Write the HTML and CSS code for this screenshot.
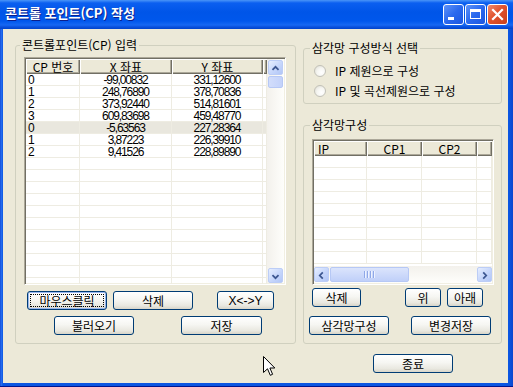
FILE: index.html
```html
<!DOCTYPE html>
<html lang="ko">
<head>
  <meta charset="UTF-8">
  <title>콘트롤 포인트(CP) 작성</title>
  <link rel="stylesheet" href="styles.css">
</head>
<body>

<div class="window">
  <div class="titlebar">
    <span class="title">콘트롤 포인트(CP) 작성</span>
    <div class="caption-buttons">
      <span class="cap-btn cap-min"><svg width="19" height="19" viewBox="0 0 19 19"><rect x="4" y="12" width="6" height="3" fill="#fff"/></svg></span>
      <span class="cap-btn cap-max"><svg width="19" height="19" viewBox="0 0 19 19"><rect x="4.5" y="4.5" width="10" height="9" fill="none" stroke="#fff" stroke-width="1"/><rect x="4" y="4" width="11" height="3" fill="#fff"/></svg></span>
      <span class="cap-btn cap-close"><svg width="19" height="19" viewBox="0 0 19 19"><path d="M5 5 L14 14 M14 5 L5 14" stroke="#fff" stroke-width="2.2" stroke-linecap="square"/></svg></span>
    </div>
  </div>

  <div class="frame">
    <div class="client">

      <!-- 콘트롤포인트 입력 -->
      <fieldset class="group group-cp">
        <legend>콘트롤포인트(CP) 입력</legend>
        <div class="listview list-cp">
          <div class="list-main">
            <div class="list-head">
              <span>CP 번호</span><span>X 좌표</span><span>Y 좌표</span><span></span>
            </div>
            <div class="list-rows">
              <div class="row"><span class="c-no">0</span><span class="num">-99,00832</span><span class="num">331,12600</span><span></span></div>
              <div class="row"><span class="c-no">1</span><span class="num">248,76890</span><span class="num">378,70836</span><span></span></div>
              <div class="row"><span class="c-no">2</span><span class="num">373,92440</span><span class="num">514,81601</span><span></span></div>
              <div class="row"><span class="c-no">3</span><span class="num">609,83698</span><span class="num">459,48770</span><span></span></div>
              <div class="row selected"><span class="c-no">0</span><span class="num">-5,63563</span><span class="num">227,28364</span><span></span></div>
              <div class="row"><span class="c-no">1</span><span class="num">3,87223</span><span class="num">226,39910</span><span></span></div>
              <div class="row"><span class="c-no">2</span><span class="num">9,41526</span><span class="num">228,89890</span><span></span></div>
              <div class="row"><span></span><span></span><span></span><span></span></div>
              <div class="row"><span></span><span></span><span></span><span></span></div>
              <div class="row"><span></span><span></span><span></span><span></span></div>
              <div class="row"><span></span><span></span><span></span><span></span></div>
              <div class="row"><span></span><span></span><span></span><span></span></div>
              <div class="row"><span></span><span></span><span></span><span></span></div>
              <div class="row"><span></span><span></span><span></span><span></span></div>
              <div class="row"><span></span><span></span><span></span><span></span></div>
              <div class="row"><span></span><span></span><span></span><span></span></div>
              <div class="row"><span></span><span></span><span></span><span></span></div>
              <div class="row"><span></span><span></span><span></span><span></span></div>
            </div>
          </div>
          <div class="vscroll">
            <span class="sb-btn"><svg width="15" height="15" viewBox="0 0 15 15"><path d="M4 9 L7.5 5.5 L11 9" fill="none" stroke="#3c5690" stroke-width="2"/></svg></span>
            <span class="sb-thumb sb-thumb-v"></span>
            <span class="sb-fill"></span>
            <span class="sb-btn"><svg width="15" height="15" viewBox="0 0 15 15"><path d="M4 6 L7.5 9.5 L11 6" fill="none" stroke="#3c5690" stroke-width="2"/></svg></span>
          </div>
        </div>
        <div class="btn-row row-a">
          <button class="btn focus b-mouse">마우스클릭</button>
          <button class="btn b-del">삭제</button>
          <button class="btn b-swap">X&lt;-&gt;Y</button>
        </div>
        <div class="btn-row row-b">
          <button class="btn b-load">불러오기</button>
          <button class="btn b-save">저장</button>
        </div>
      </fieldset>

      <div class="right-col">
        <!-- 구성방식 -->
        <fieldset class="group group-mode">
          <legend>삼각망 구성방식 선택</legend>
          <label class="radio"><span class="radio-dot"></span>IP 제원으로 구성</label>
          <label class="radio"><span class="radio-dot"></span>IP 및 곡선제원으로 구성</label>
        </fieldset>

        <!-- 삼각망구성 -->
        <fieldset class="group group-tri">
          <legend>삼각망구성</legend>
          <div class="listview list-tri">
            <div class="list-head">
              <span class="left">IP</span><span>CP1</span><span>CP2</span><span></span>
            </div>
            <div class="list-rows">
              <div class="row"><span></span><span></span><span></span><span></span></div>
              <div class="row"><span></span><span></span><span></span><span></span></div>
              <div class="row"><span></span><span></span><span></span><span></span></div>
              <div class="row"><span></span><span></span><span></span><span></span></div>
              <div class="row"><span></span><span></span><span></span><span></span></div>
              <div class="row"><span></span><span></span><span></span><span></span></div>
              <div class="row"><span></span><span></span><span></span><span></span></div>
              <div class="row"><span></span><span></span><span></span><span></span></div>
              <div class="row"><span></span><span></span><span></span><span></span></div>
            </div>
            <div class="hscroll">
              <span class="sb-btn"><svg width="15" height="15" viewBox="0 0 15 15"><path d="M9 4 L5.5 7.5 L9 11" fill="none" stroke="#3c5690" stroke-width="2"/></svg></span>
              <span class="sb-thumb sb-thumb-h"><i></i><i></i><i></i><i></i></span>
              <span class="sb-fill"></span>
              <span class="sb-btn"><svg width="15" height="15" viewBox="0 0 15 15"><path d="M6 4 L9.5 7.5 L6 11" fill="none" stroke="#3c5690" stroke-width="2"/></svg></span>
            </div>
          </div>
          <div class="btn-row row-c">
            <button class="btn b-tdel">삭제</button>
            <button class="btn b-up">위</button>
            <button class="btn b-down">아래</button>
          </div>
          <div class="btn-row row-d">
            <button class="btn b-build">삼각망구성</button>
            <button class="btn b-apply">변경저장</button>
          </div>
        </fieldset>

        <div class="exit-row">
          <button class="btn b-exit">종료</button>
        </div>
      </div>

    </div>
  </div>

  <svg class="cursor" width="13" height="21" viewBox="0 0 13 21">
    <path d="M0.5 0.5 L0.5 16.5 L4.5 12.8 L7.3 19.3 L9.6 18.3 L6.9 12 L11.8 12 Z" fill="#fff" stroke="#000" stroke-width="1"/>
  </svg>
</div>

</body>
</html>
```

FILE: styles.css
```css
* {
  box-sizing: border-box;
}

body {
  margin: 0;
  font-family: "Noto Sans CJK KR", "Liberation Sans", sans-serif;
  font-size: 12px;
  color: #000;
  background: #fff;
}

.window {
  position: relative;
  width: 513px;
  height: 387px;
  display: flex;
  flex-direction: column;
}

/* 타이틀바 */
.titlebar {
  height: 29px;
  display: flex;
  align-items: center;
  padding: 0 5px 3px 5px;
  background: linear-gradient(#4a95f8 0, #0b5ff0 3px, #0055e8 12px, #0057ec 21px, #1668f3 25px, #0a50dc 27px, #0044cc 29px);
}

.title {
  flex: 1;
  color: #fff;
  font-weight: 700;
  font-size: 13px;
  line-height: 16px;
  text-shadow: 1px 1px #0b1f8c;
}

.caption-buttons {
  display: flex;
  gap: 1px;
  margin-top: 2px;
}

.cap-btn {
  width: 21px;
  height: 21px;
  border: 1px solid #fff;
  border-radius: 3px;
  display: flex;
  background: linear-gradient(135deg, #5f93f8 0, #2a69ee 50%, #1b56e0 100%);
}

.cap-close {
  background: linear-gradient(135deg, #f08a6c 0, #e0532e 45%, #c8401c 100%);
}

/* 창 테두리 */
.frame {
  flex: 1;
  display: flex;
  padding: 0 5px 3px 3px;
  background: linear-gradient(to right, #0a3ccc 0, #2a72f2 1px, #0b56e2 3px, #0b56e2 calc(100% - 4px), #0a46cc 100%);
  border-bottom: 1px solid #00158e;
}

.client {
  flex: 1;
  background: #ece9d8;
  display: flex;
  align-items: flex-start;
  padding-left: 12px;
}

/* 그룹박스 */
.group {
  margin: 0;
  min-width: 0;
  border: 1px solid #d0d0bf;
  border-radius: 3px;
}

.group legend {
  padding: 0 2px;
  font-size: 12px;
  line-height: 14px;
  color: #000;
}

.group-cp {
  width: 281px;
  margin-top: 9px;
  padding: 5px 9px 8px 8px;
}

.group-cp legend {
  margin-left: -4px;
}

.right-col {
  width: 199px;
  margin-left: 7px;
  margin-top: 12px;
  display: flex;
  flex-direction: column;
}

.group-mode {
  padding: 6px 9px 2px 9px;
}

.group-mode legend {
  margin-left: -3px;
}

.group-tri {
  margin-top: 14px;
  padding: 7px 7px 8px 8px;
}

.group-tri legend {
  margin-left: -2px;
}

/* 라디오 */
.radio {
  display: flex;
  align-items: center;
  height: 20px;
  line-height: 14px;
}

.radio-dot {
  width: 12px;
  height: 12px;
  margin: 0 9px 0 1px;
  border: 1px solid #c2c1b8;
  border-radius: 50%;
  background: radial-gradient(circle at 65% 65%, #fff 0, #f6f6f2 45%, #dcdbd2 100%);
}

/* 리스트뷰 */
.listview {
  display: flex;
  background: #fff;
  border: 1px solid;
  border-color: #aca899 #fff #fff #aca899;
  box-shadow: inset 1px 1px #716f64, inset -1px -1px #f1efe2;
  padding: 1px;
  overflow: hidden;
}

.list-cp {
  width: 262px;
  height: 228px;
}

.list-main {
  width: 241px;
}

.list-head,
.row {
  display: grid;
}

.list-cp .list-head,
.list-cp .row {
  grid-template-columns: 54px 92px 91px 4px;
}

.list-head {
  height: 15px;
  background: #ece9d8;
}

.list-head span {
  text-align: center;
  line-height: 15px;
  white-space: nowrap;
  box-shadow: inset 1px 1px #fff, inset -1px -1px #716f64, inset -2px -2px #aca899;
}

.list-head span.left {
  text-align: left;
  padding-left: 4px;
}

.row {
  height: 12px;
}

.row span {
  height: 12px;
  border-right: 1px solid #eeece2;
  border-bottom: 1px solid #eeece2;
  line-height: 12px;
  white-space: nowrap;
}

.row.selected {
  background: #e9e7de;
}

.row .c-no {
  padding-left: 2px;
  font-family: "Liberation Sans", sans-serif;
}

.row .num {
  text-align: center;
  font-family: "Liberation Sans", sans-serif;
  letter-spacing: -1.1px;
}

/* 스크롤바 */
.vscroll {
  width: 17px;
  display: flex;
  flex-direction: column;
  align-items: center;
  background: linear-gradient(to right, #f3f1ec, #fefefb);
}

.hscroll {
  height: 17px;
  display: flex;
  align-items: center;
  background: linear-gradient(#f3f1ec, #fefefb);
}

.sb-btn {
  width: 15px;
  height: 15px;
  flex: none;
  display: flex;
  border: 1px solid #bccdf6;
  border-radius: 2px;
  background: linear-gradient(135deg, #e6eeff 0, #c6d6fb 55%, #b1c6f7 100%);
}

.vscroll .sb-btn:first-child {
  margin-top: 1px;
}

.sb-thumb {
  flex: none;
  border: 1px solid #b6c8f5;
  border-radius: 2px;
  background: linear-gradient(to right, #d2ddfb, #c3d2fa);
}

.sb-thumb-v {
  width: 15px;
  height: 12px;
  margin-top: 1px;
}

.sb-thumb-h {
  width: 79px;
  height: 15px;
  margin-left: 1px;
  display: flex;
  justify-content: center;
  align-items: center;
  gap: 1px;
  background: linear-gradient(#dbe4fc, #c0d0f9);
}

.sb-thumb-h i {
  width: 1px;
  height: 7px;
  background: #8fa8e8;
  box-shadow: 1px 0 #eef3ff;
  margin-right: 1px;
}

.sb-fill {
  flex: 1;
}

.list-tri {
  width: 182px;
  height: 146px;
  flex-direction: column;
}

.list-tri .list-head,
.list-tri .row {
  grid-template-columns: 53px 55px 55px 15px;
}

.list-tri .list-rows {
  flex: 1;
  overflow: hidden;
}

/* 버튼 */
.btn-row {
  display: flex;
}

.btn {
  height: 19px;
  padding: 0;
  border: 1px solid #003c74;
  border-radius: 3px;
  background: linear-gradient(#ffffff 0, #f6f6f2 45%, #e9e8e0 80%, #d8d5c9 100%);
  font-family: "Noto Sans CJK KR", "Liberation Sans", sans-serif;
  font-size: 12px;
  line-height: 16px;
  color: #000;
}

.btn.focus {
  box-shadow: inset 0 0 0 1px #98b6ee;
  outline: 1px dotted #000;
  outline-offset: -4px;
}

.row-a { margin-top: 6px; }
.row-b { margin-top: 6px; }

.b-mouse { width: 80px; margin-left: 3px; }
.b-del   { width: 80px; margin-left: 6px; }
.b-swap  { width: 57px; margin-left: 24px; font-family: "Liberation Sans", sans-serif; }
.b-load  { width: 80px; margin-left: 30px; }
.b-save  { width: 81px; margin-left: 47px; }

.row-c { margin-top: 3px; }
.row-d { margin-top: 9px; }

.b-tdel  { width: 49px; }
.b-up    { width: 36px; margin-left: 44px; }
.b-down  { width: 36px; margin-left: 6px; }
.b-build { width: 80px; margin-left: -3px; }
.b-apply { width: 80px; margin-left: 22px; }

.exit-row {
  margin-top: 10px;
}

.b-exit {
  width: 80px;
  margin-left: 70px;
}

/* 마우스 커서 */
.cursor {
  position: absolute;
  left: 263px;
  top: 356px;
}
```
